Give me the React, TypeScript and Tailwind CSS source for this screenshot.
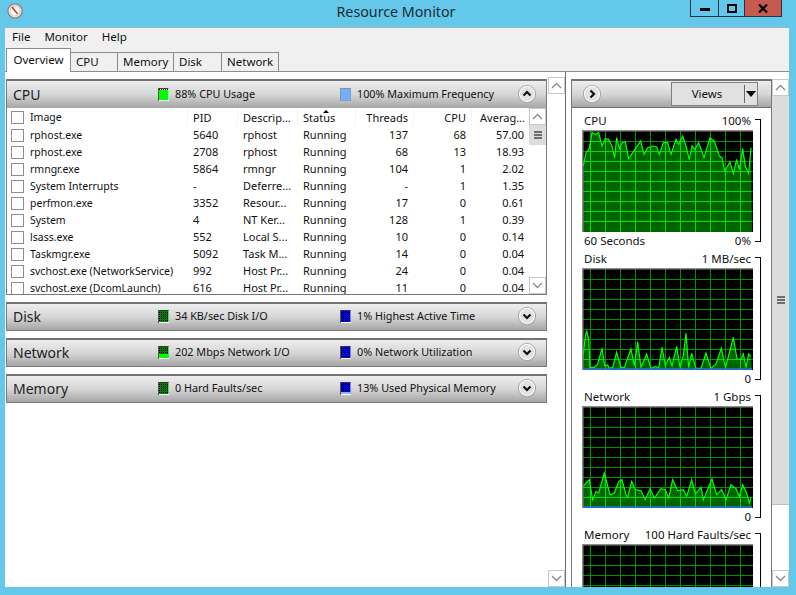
import React from "react";

type P = [number, number];

const cpuZ: P[] = [[72,200],[80,160],[90,148],[98,100],[108,105],[118,100],[128,140],[138,118],[148,120],[158,140],[166,175],[172,115],[180,148],[188,130],[198,128],[208,178],[228,148],[244,125],[254,165],[265,145],[280,140],[292,142],[300,165],[312,130],[325,130],[335,165],[350,120],[358,135],[370,110],[380,140],[390,180],[398,140],[406,150],[418,130],[434,175],[452,115],[465,125],[480,170],[488,175],[496,215],[512,188],[522,222],[532,180],[540,210],[550,148],[558,200],[568,222],[575,145]];
const diskZ: P[] = [[70,330],[78,262],[82,245],[88,270],[92,355],[105,355],[115,345],[128,298],[136,350],[145,348],[150,358],[160,355],[172,310],[185,355],[195,355],[215,300],[225,350],[235,278],[245,355],[262,315],[275,358],[290,352],[298,358],[308,295],[318,350],[330,325],[338,350],[352,292],[362,355],[372,320],[380,253],[388,355],[397,313],[410,358],[425,358],[440,312],[455,358],[470,345],[486,298],[498,355],[505,330],[522,265],[533,330],[545,330],[552,315],[560,355],[568,315],[575,322]];
const netZ: P[] = [[72,215],[80,205],[90,195],[100,255],[110,230],[118,235],[135,175],[152,240],[165,235],[178,200],[188,195],[200,240],[205,248],[217,200],[228,225],[245,228],[258,255],[272,222],[285,250],[305,222],[318,225],[328,250],[340,195],[355,228],[372,225],[382,245],[397,195],[408,238],[425,218],[432,255],[458,193],[472,240],[487,225],[500,255],[515,210],[530,222],[540,245],[550,210],[562,235],[570,265],[575,248]];

const cpuPts: P[] = cpuZ.map(([x, y]) => [(x - 68) / 3, (y - 92) / 3]);
const diskPts: P[] = diskZ.map(([x, y]) => [(x - 68) / 3, (y - 57) / 3]);
const netPts: P[] = netZ.map(([x, y]) => [(x - 68) / 3, (y + 26) / 3]);

const VX = [8, 23, 38, 53, 68, 83, 98, 113, 128, 143, 158];
const HY = [11, 21, 31, 41, 51, 61, 71, 81, 91];

function Grid({ color }: { color: string }) {
  return (
    <g stroke={color} strokeWidth="1">
      {VX.map((x) => (
        <line key={x} x1={x + 0.5} x2={x + 0.5} y1={0} y2={102} />
      ))}
      {HY.map((y) => (
        <line key={y} y1={y + 0.5} y2={y + 0.5} x1={0} x2={171} />
      ))}
    </g>
  );
}

function Graph({ id, pts, blue }: { id: string; pts?: P[]; blue?: boolean }) {
  const line = pts ? pts.map((p) => p.join(",")).join(" ") : "";
  const poly = pts ? `1,102 ${line} 170,102` : "";
  return (
    <svg width="171" height="102" viewBox="0 0 171 102" className="block">
      <rect width="171" height="102" fill="#000" />
      <Grid color="#009400" />
      {pts && (
        <>
          <clipPath id={id}>
            <polygon points={poly} />
          </clipPath>
          <polygon points={poly} fill="#006400" />
          <g clipPath={`url(#${id})`}>
            <Grid color="#00e000" />
          </g>
          <polyline points={line} fill="none" stroke="#00ff00" strokeWidth="1.2" />
        </>
      )}
      {blue && <line x1="1" x2="170" y1="101" y2="101" stroke="#2a6ff0" strokeWidth="1.5" />}
      <rect x="0" y="0" width="171" height="1.5" fill="#8a8a8a" />
      <rect x="0" y="0" width="1.5" height="102" fill="#8a8a8a" />
    </svg>
  );
}

function GraphBlock(props: {
  id: string;
  title: string;
  max: string;
  left?: string;
  min?: string;
  pts?: P[];
  blue?: boolean;
}) {
  return (
    <div className="flex h-[138px] shrink-0">
      <div className="flex w-[171px] flex-col">
        <div className="flex h-[18px] items-center justify-between px-[2px] text-[11.5px]">
          <span>{props.title}</span>
          <span>{props.max}</span>
        </div>
        <Graph id={props.id} pts={props.pts} blue={props.blue} />
        <div className="flex h-[18px] items-center justify-between px-[2px] text-[11.5px]">
          <span>{props.left ?? ""}</span>
          <span>{props.min ?? ""}</span>
        </div>
      </div>
      <div className="ml-[2px] mt-[7px] h-[123px] w-[6px] border-t border-r border-b border-black" />
    </div>
  );
}

function Chevron({ dir, size = 18 }: { dir: "up" | "down" | "right"; size?: number }) {
  const d =
    dir === "up" ? "M5.5 10.5 9 7l3.5 3.5" : dir === "down" ? "M5.5 7.5 9 11l3.5-3.5" : "M7.5 5.5 11 9l-3.5 3.5";
  return (
    <svg width={size} height={size} viewBox="0 0 18 18" className="block shrink-0">
      <circle cx="9" cy="9" r="9" fill="#9c9c9c" />
      <circle cx="9" cy="9" r="8.2" fill="#fafafa" />
      <circle cx="9" cy="9" r="7" fill="#e2e2e2" />
      <path d={d} fill="none" stroke="#111" strokeWidth="2.2" />
    </svg>
  );
}

function Legend({ color, dark, level = 0 }: { color: string; dark?: string; level?: number }) {
  const stripes = [1, 3, 5, 7, 9];
  if (!dark) {
    return (
      <svg width="11" height="13" viewBox="0 0 11 13" className="block shrink-0">
        <rect width="11" height="13" fill="#8f8f8f" />
        <rect x="1" y="1" width="9.5" height="11.5" fill={color} />
      </svg>
    );
  }
  return (
    <svg width="11" height="13" viewBox="0 0 11 13" className="block shrink-0">
      <rect width="11" height="13" fill="#fff" />
      <rect x="0" y="0" width="1" height="13" fill="#555" />
      <rect x="1" y="0" width="9.5" height="12" fill={dark} />
      {level > 0 && <rect x="1" y={12 - level} width="9.5" height={level} fill={color} />}
      {stripes.map((x) => (
        <line key={x} x1={x + 0.5} x2={x + 0.5} y1="0" y2={12 - level} stroke="#000" strokeWidth="1" strokeDasharray="1 1" />
      ))}
      <rect x="1" y="0" width="9.5" height="1" fill="#333" />
    </svg>
  );
}

function BrightLegend() {
  return (
    <svg width="11" height="13" viewBox="0 0 11 13" className="block shrink-0">
      <rect width="11" height="13" fill="#fff" />
      <rect x="0" y="0" width="1" height="13" fill="#555" />
      <rect x="1" y="2" width="9.5" height="10" fill="#00ff00" />
      <line x1="1" x2="10.5" y1="1.5" y2="1.5" stroke="#000" strokeDasharray="1 1" />
      <rect x="1" y="0" width="9.5" height="1" fill="#444" />
    </svg>
  );
}

function SectionBar(props: {
  title: string;
  a: React.ReactNode;
  aText: string;
  b: React.ReactNode;
  bText: string;
  dir: "up" | "down";
  className?: string;
}) {
  return (
    <div
      className={
        "flex h-[29px] shrink-0 items-center border-t-2 border-t-[#737373] bg-gradient-to-b from-[#eeeeee] via-[#d6d6d6] to-[#a6a6a6] " +
        (props.className ?? "")
      }
    >
      <div className="w-[151px] shrink-0 pl-[6px] text-[14px] text-[#222]">{props.title}</div>
      <div className="flex w-[182px] shrink-0 items-center gap-[6px] text-[10.8px]">
        {props.a}
        <span>{props.aText}</span>
      </div>
      <div className="flex flex-1 items-center gap-[6px] text-[10.8px]">
        {props.b}
        <span>{props.bText}</span>
      </div>
      <div className="mr-[10px]">
        <Chevron dir={props.dir} />
      </div>
    </div>
  );
}

const COLS = "grid grid-cols-[181px_50px_60px_58px_58px_58px_58px]";

const rows = [
  ["rphost.exe", "5640", "rphost", "Running", "137", "68", "57.00"],
  ["rphost.exe", "2708", "rphost", "Running", "68", "13", "18.93"],
  ["rmngr.exe", "5864", "rmngr", "Running", "104", "1", "2.02"],
  ["System Interrupts", "-", "Deferre...", "Running", "-", "1", "1.35"],
  ["perfmon.exe", "3352", "Resour...", "Running", "17", "0", "0.61"],
  ["System", "4", "NT Ker...", "Running", "128", "1", "0.39"],
  ["lsass.exe", "552", "Local S...", "Running", "10", "0", "0.14"],
  ["Taskmgr.exe", "5092", "Task M...", "Running", "14", "0", "0.04"],
  ["svchost.exe (NetworkService)", "992", "Host Pr...", "Running", "24", "0", "0.04"],
  ["svchost.exe (DcomLaunch)", "616", "Host Pr...", "Running", "11", "0", "0.04"],
];

function Check() {
  return <div className="h-[13px] w-[13px] shrink-0 border border-[#8e8e8e] bg-white" />;
}

function Arrow({ dir }: { dir: "up" | "down" }) {
  return (
    <svg width="11" height="7" viewBox="0 0 11 7" className="block">
      <path d={dir === "up" ? "M1 6 5.5 1.5 10 6" : "M1 1 5.5 5.5 10 1"} fill="none" stroke="#8a8a8a" strokeWidth="1.3" />
    </svg>
  );
}

function ScrollButton({ dir }: { dir: "up" | "down" }) {
  return (
    <div className="flex h-[17px] shrink-0 items-center justify-center border border-[#c8c8c8] bg-white">
      <Arrow dir={dir} />
    </div>
  );
}

function Grip() {
  return (
    <div className="flex flex-col gap-[1px]">
      <div className="h-[2px] w-[8px] bg-[#6e6e6e]" />
      <div className="h-[2px] w-[8px] bg-[#6e6e6e]" />
      <div className="h-[2px] w-[8px] bg-[#6e6e6e]" />
    </div>
  );
}

const TABS = [
  ["CPU", "w-[47px]"],
  ["Memory", "w-[56px]"],
  ["Disk", "w-[48px]"],
  ["Network", "w-[57px]"],
];

export default function App() {
  return (
    <div
      className="flex h-[595px] w-[796px] flex-col overflow-hidden bg-[#63c8ea] text-[#111]"
      style={{ fontFamily: '"Noto Sans", "Open Sans", sans-serif' }}
    >
      {/* title bar */}
      <div className="flex h-[27px] shrink-0 items-start">
        <div className="w-[106px] pl-[7px] pt-[3px]">
          <svg width="16" height="16" viewBox="0 0 18 18" className="block">
            <circle cx="9" cy="9" r="8" fill="#efe9e2" stroke="#8d8378" strokeWidth="1.4" />
            <circle cx="9" cy="9" r="5.6" fill="#fff" stroke="#c9c1b8" />
            <path d="M5.5 4.5 12 12.5" stroke="#d23a2a" strokeWidth="1.8" />
          </svg>
        </div>
        <div className="flex-1 pr-[4px] pt-[2px] text-center text-[14.25px] leading-[20px] text-[#1c2a33]">Resource Monitor</div>
        <div className="mr-[14px] flex h-[17px] w-[92px] border border-t-0 border-[#27343c]">
          <div className="flex w-[28px] items-center justify-center border-r border-[#27343c]">
            <div className="mt-[2px] h-[3px] w-[10px] bg-black" />
          </div>
          <div className="flex w-[26px] items-center justify-center border-r border-[#27343c]">
            <div className="h-[9px] w-[10px] border-2 border-black" />
          </div>
          <div className="flex flex-1 items-center justify-center bg-[#c75a50]">
            <svg width="10" height="9" viewBox="0 0 10 9">
              <path d="M1 .5 9 8.5M9 .5 1 8.5" stroke="#000" strokeWidth="2.2" />
            </svg>
          </div>
        </div>
      </div>

      {/* client */}
      <div className="ml-[5px] mr-[7px] mb-[8px] flex min-h-0 flex-1 flex-col overflow-hidden border-t border-[#9cb8c4] bg-[#f0f0f0]">
        {/* menu */}
        <div className="flex h-[21px] shrink-0 items-center gap-[14px] pb-[4px] pl-[7px] text-[11.5px]">
          <span>File</span>
          <span>Monitor</span>
          <span>Help</span>
        </div>
        {/* tabs */}
        <div className="flex h-[23px] shrink-0 items-end border-b border-[#8c8c8c] pl-[1px]">
          <div className="-mb-[1px] flex h-[24px] w-[65px] items-center justify-center border border-b-0 border-[#8c8c8c] bg-white pb-[2px] text-[11.5px]">
            Overview
          </div>
          {TABS.map(([t, w]) => (
            <div key={t} className={"flex h-[19px] items-center border border-b-0 border-l-0 border-[#8c8c8c] pl-[5px] text-[11.5px] " + w}>
              {t}
            </div>
          ))}
        </div>

        {/* body */}
        <div className="flex min-h-0 flex-1 bg-white">
          {/* left pane */}
          <div className="flex w-[560px] shrink-0 pt-[5px] pl-[1px]">
            <div className="flex w-[541px] shrink-0 flex-col gap-[7px] pt-[2px]">
              <div className="flex h-[216px] shrink-0 flex-col border-x border-b border-[#7a7a7a]">
                <SectionBar
                  className="pb-[1px]"
                  title="CPU"
                  a={<BrightLegend />}
                  aText="88% CPU Usage"
                  b={<Legend color="#70b0ff" />}
                  bText="100% Maximum Frequency"
                  dir="up"
                />
                <div className="flex min-h-0 flex-1">
                  <div className="min-w-0 flex-1 overflow-hidden pt-[1px] text-[11px]">
                    <div className={COLS + " h-[17px] bg-[#f3f3f3]"}>
                      <div className="mr-[1px] flex items-center gap-[6px] bg-white pl-[4px] text-[10.5px]">
                        <Check />
                        <span className="mt-[1px]">Image</span>
                      </div>
                      <div className="mr-[1px] bg-white pl-[5px] leading-[17px]">PID</div>
                      <div className="mr-[1px] bg-white pl-[5px] leading-[17px]">Descrip...</div>
                      <div className="relative mr-[1px] bg-white pl-[5px] leading-[17px]">
                        Status
                        <div className="absolute left-[25px] top-[1px] h-0 w-0 border-x-[3px] border-b-[3px] border-x-transparent border-b-black" />
                      </div>
                      <div className="mr-[1px] bg-white pr-[5px] text-right leading-[17px]">Threads</div>
                      <div className="mr-[1px] bg-white pr-[5px] text-right leading-[17px]">CPU</div>
                      <div className="bg-white pr-[5px] text-right leading-[17px]">Averag...</div>
                    </div>
                    {rows.map((r, i) => (
                      <div key={i} className={COLS + " h-[17px] leading-[17px]"}>
                        <div className="flex items-center gap-[6px] pl-[4px] text-[10.5px]">
                          <Check />
                          <span className="mt-[1px]">{r[0]}</span>
                        </div>
                        <div className="pl-[5px]">{r[1]}</div>
                        <div className="pl-[5px]">{r[2]}</div>
                        <div className="pl-[5px]">{r[3]}</div>
                        <div className="pr-[6px] text-right">{r[4]}</div>
                        <div className="pr-[6px] text-right">{r[5]}</div>
                        <div className="pr-[6px] text-right">{r[6]}</div>
                      </div>
                    ))}
                  </div>
                  <div className="flex w-[17px] shrink-0 flex-col">
                    <ScrollButton dir="up" />
                    <div className="flex h-[20px] shrink-0 items-center justify-center bg-[#dcdcdc]">
                      <Grip />
                    </div>
                    <div className="flex-1" />
                    <ScrollButton dir="down" />
                  </div>
                </div>
              </div>
              <SectionBar
                className="border-x border-b border-[#7a7a7a] pb-[2px]"
                title="Disk"
                a={<Legend color="#00a000" dark="#008000" />}
                aText="34 KB/sec Disk I/O"
                b={<Legend color="#0000e0" dark="#0000f0" />}
                bText="1% Highest Active Time"
                dir="down"
              />
              <SectionBar
                className="border-x border-b border-[#7a7a7a] pb-[2px]"
                title="Network"
                a={<Legend color="#00ff00" dark="#008000" level={4} />}
                aText="202 Mbps Network I/O"
                b={<Legend color="#0000e0" dark="#0000f0" />}
                bText="0% Network Utilization"
                dir="down"
              />
              <SectionBar
                className="border-x border-b border-[#7a7a7a] pb-[2px]"
                title="Memory"
                a={<Legend color="#00a000" dark="#008000" />}
                aText="0 Hard Faults/sec"
                b={<Legend color="#80b8ff" dark="#0000f0" level={2} />}
                bText="13% Used Physical Memory"
                dir="down"
              />
            </div>
            <div className="ml-[1px] flex w-[17px] shrink-0 flex-col">
              <ScrollButton dir="up" />
              <div className="flex-1" />
              <ScrollButton dir="down" />
            </div>
          </div>

          {/* divider */}
          <div className="w-[1px] shrink-0 bg-[#6e6e6e]" />

          {/* right pane */}
          <div className="ml-[5px] mt-[5px] flex min-h-0 flex-1 pt-[2px]">
            <div className="flex w-[201px] shrink-0 flex-col overflow-hidden border-x border-[#7a7a7a]">
              <div className="flex h-[29px] shrink-0 items-center border-t-2 border-b border-t-[#737373] border-b-[#6e6e6e] bg-gradient-to-b from-[#eeeeee] via-[#d6d6d6] to-[#a6a6a6] pl-[11px]">
                <Chevron dir="right" />
                <div className="ml-[70px] flex h-[24px] w-[87px] items-center border border-[#808080] bg-[#e1e1e1] text-[11.5px]">
                  <div className="flex-1 pr-[2px] text-center">Views</div>
                  <div className="h-[18px] w-[1px] bg-[#666]" />
                  <div className="ml-[1px] mr-[1px] h-0 w-0 border-x-[5px] border-t-[6px] border-x-transparent border-t-black" />
                </div>
              </div>
              <div className="flex min-h-0 flex-1 flex-col overflow-hidden pl-[10px] pt-[4px]">
                <GraphBlock id="g-cpu" title="CPU" max="100%" left="60 Seconds" min="0%" pts={cpuPts} />
                <GraphBlock id="g-disk" title="Disk" max="1 MB/sec" min="0" pts={diskPts} blue />
                <GraphBlock id="g-net" title="Network" max="1 Gbps" min="0" pts={netPts} blue />
                <GraphBlock id="g-mem" title="Memory" max="100 Hard Faults/sec" />
              </div>
            </div>
            <div className="flex w-[17px] shrink-0 flex-col">
              <ScrollButton dir="up" />
              <div className="flex h-[409px] shrink-0 items-center justify-center border-b border-[#c0c0c0] bg-[#dcdcdc]">
                <Grip />
              </div>
              <div className="flex-1" />
              <ScrollButton dir="down" />
            </div>
          </div>
        </div>
      </div>
    </div>
  );
}
